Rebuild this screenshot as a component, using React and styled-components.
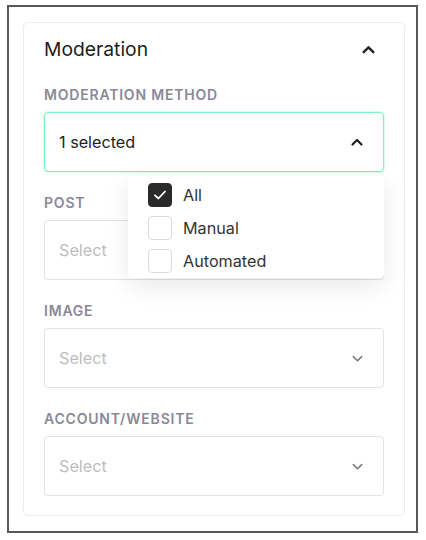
import React, { useState } from "react";
import styled, { createGlobalStyle } from "styled-components";

const GlobalStyle = createGlobalStyle`
  body {
    margin: 0;
    background: #ffffff;
    font-family: Inter, "Noto Sans", sans-serif;
    color: #222222;
  }
  * { box-sizing: border-box; }
`;

const Frame = styled.div`
  margin: 5px 0 0 7px;
  width: 411px;
  height: 528px;
  border: 2px solid #585858;
  padding: 15px 11px 0 14px;
  overflow: hidden;
`;

const Card = styled.section`
  height: 494px;
  border: 1px solid #ececec;
  border-radius: 5px;
  padding: 13px 20px 0 20px;
`;

const Header = styled.div`
  display: flex;
  align-items: center;
  justify-content: space-between;
  height: 26px;
  padding-right: 8px;
`;

const Title = styled.h2`
  margin: 0;
  font-size: 19.3px;
  font-weight: 400;
  color: #1e1e1e;
`;

const Field = styled.div`
  position: relative;
  margin-top: ${p => p.$top}px;
`;

const Label = styled.div`
  font-size: 14px;
  font-weight: 600;
  letter-spacing: 0.8px;
  color: #8a8898;
  line-height: 16px;
  text-transform: uppercase;
  margin-bottom: 9px;
`;

const SelectBox = styled.div`
  height: 60px;
  display: flex;
  align-items: center;
  justify-content: space-between;
  padding: 0 19px 0 14px;
  border: 1px solid ${p => (p.$open ? "#7cf0bf" : "#e2e2e2")};
  box-shadow: ${p => (p.$open ? "0 0 0 1px #d9fbec" : "none")};
  border-radius: 4px;
  background: #fff;
  font-size: 16.2px;
  color: ${p => (p.$placeholder ? "#bdbdbd" : "#222")};
`;

const Menu = styled.div`
  position: absolute;
  top: 89px;
  left: 84px;
  right: 0;
  background: #fff;
  border-radius: 4px;
  box-shadow: 0 8px 24px rgba(0, 0, 0, 0.09);
  padding: 7px 0 5px 20px;
  display: flex;
  flex-direction: column;
  gap: 9px;
  z-index: 2;
`;

const Option = styled.label`
  display: flex;
  align-items: center;
  gap: 11px;
  font-size: 16.2px;
  color: #333;
  cursor: pointer;
`;

const Box = styled.span`
  width: 24px;
  height: 24px;
  border-radius: 4px;
  border: 1px solid ${p => (p.$checked ? "#2a2a2a" : "#dcdcdc")};
  background: ${p => (p.$checked ? "#2a2a2a" : "#fff")};
  display: flex;
  align-items: center;
  justify-content: center;
`;

const Chevron = ({ up, size = 14, color = "#222", width = 2.2 }) => (
  <svg width={size} height={size} viewBox="0 0 14 14" fill="none">
    <path
      d={up ? "M2.5 9.5 L7 5 L11.5 9.5" : "M2.5 5 L7 9.5 L11.5 5"}
      stroke={color}
      strokeWidth={width}
      strokeLinecap="round"
      strokeLinejoin="round"
    />
  </svg>
);

const Check = () => (
  <svg width="16" height="16" viewBox="0 0 16 16" fill="none">
    <path d="M3 8.3 L6.4 11.5 L13 4.5" stroke="#fff" strokeWidth="1.8" strokeLinecap="round" strokeLinejoin="round" />
  </svg>
);

const options = ["All", "Manual", "Automated"];

const PlainSelect = ({ label, top }) => (
  <Field $top={top}>
    <Label>{label}</Label>
    <SelectBox $placeholder>
      Select
      <Chevron size={13} color="#777" width={1.6} />
    </SelectBox>
  </Field>
);

export default function App() {
  const [checked, setChecked] = useState({ All: true });

  return (
    <>
      <GlobalStyle />
      <Frame>
        <Card>
          <Header>
            <Title>Moderation</Title>
            <Chevron up size={15} />
          </Header>
          <Field $top={25}>
            <Label>Moderation method</Label>
            <SelectBox $open>
              1 selected
              <Chevron up size={14} />
            </SelectBox>
            <Menu>
              {options.map(o => (
                <Option key={o} onClick={() => setChecked({ ...checked, [o]: !checked[o] })}>
                  <Box $checked={checked[o]}>{checked[o] && <Check />}</Box>
                  {o}
                </Option>
              ))}
            </Menu>
          </Field>
          <PlainSelect label="Post" top={23} />
          <PlainSelect label="Image" top={23} />
          <PlainSelect label="Account/Website" top={23} />
        </Card>
      </Frame>
    </>
  );
}
